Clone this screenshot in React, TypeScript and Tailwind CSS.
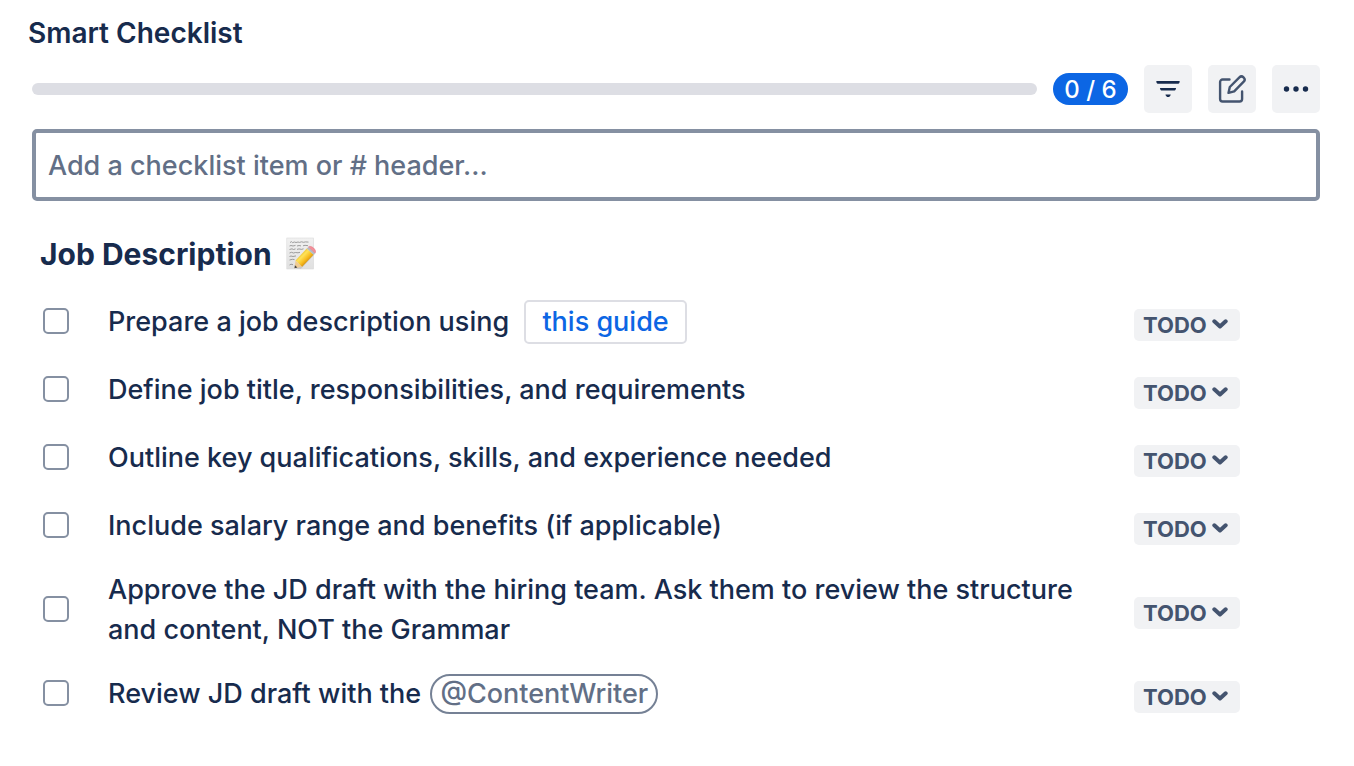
import type { ReactNode } from 'react';

interface ChecklistItem {
  id: number;
  label: string;
  content: ReactNode;
}

const items: ChecklistItem[] = [
  {
    id: 1,
    label: 'Prepare a job description using this guide',
    content: (
      <>
        Prepare a job description using{' '}
        <a
          href="#guide"
          className="ml-2 inline-block h-11 rounded-[5px] border-2 border-[#dddee4] px-4 leading-10 text-[#0c66e4]"
        >
          this guide
        </a>
      </>
    ),
  },
  {
    id: 2,
    label: 'Define job title',
    content: 'Define job title, responsibilities, and requirements',
  },
  {
    id: 3,
    label: 'Outline key qualifications',
    content: 'Outline key qualifications, skills, and experience needed',
  },
  {
    id: 4,
    label: 'Include salary range and benefits',
    content: 'Include salary range and benefits (if applicable)',
  },
  {
    id: 5,
    label: 'Approve the JD draft',
    content:
      'Approve the JD draft with the hiring team. Ask them to review the structure and content, NOT the Grammar',
  },
  {
    id: 6,
    label: 'Review JD draft',
    content: (
      <>
        Review JD draft with the{' '}
        <a
          href="#content-writer"
          className="ml-0.5 inline-block h-10 rounded-full border-2 border-[#758195] px-2 leading-9 text-[#626f86]"
        >
          @ContentWriter
        </a>
      </>
    ),
  },
];

function FilterIcon() {
  return (
    <svg width="24" height="18" viewBox="0 0 24 18" fill="#172b4d" aria-hidden="true">
      <path d="M1 1h22a.8.8 0 0 1 .6 1.200l-.5 1a.9.9 0 0 1-.8.500H1.700a.9.9 0 0 1-.8-.5l-.5-1A.8.8 0 0 1 1 1z" />
      <path d="M4.600 8h14.800c.5 0 .8.400.6.800l-.5 1a1 1 0 0 1-.8.600H5.300a1 1 0 0 1-.8-.6l-.5-1c-.2-.4.100-.8.600-.8z" />
      <path d="M10 14.400h4.200c.5 0 .7.400.4.800l-1.200 1.500a1 1 0 0 1-.8.400h-1a1 1 0 0 1-.8-.4l-1.200-1.500c-.3-.4-.1-.8.400-.8z" />
    </svg>
  );
}

function EditIcon() {
  return (
    <svg
      width="30"
      height="30"
      viewBox="0 0 30 30"
      fill="none"
      stroke="#44546f"
      strokeWidth="2.400"
      strokeLinecap="round"
      strokeLinejoin="round"
      aria-hidden="true"
    >
      <path d="M12.500 5.500H5.600a2.500 2.500 0 0 0-2.500 2.500v17a2.500 2.500 0 0 0 2.500 2.500h17a2.500 2.500 0 0 0 2.500-2.500V17.500" />
      <path d="M11.500 18.900l1.300-5.900L22.400 3.400a2.900 2.900 0 0 1 4.100 0l.2.200a2.900 2.900 0 0 1 0 4.100L17.200 17.400z" />
    </svg>
  );
}

function MoreIcon() {
  return (
    <svg width="26" height="6" viewBox="0 0 26 6" fill="#172b4d" aria-hidden="true">
      <circle cx="3.500" cy="3" r="2.700" />
      <circle cx="13" cy="3" r="2.700" />
      <circle cx="22.500" cy="3" r="2.700" />
    </svg>
  );
}

function MemoIcon() {
  return (
    <svg width="30" height="34" viewBox="0 0 30 34" role="img" aria-label="memo">
      <defs>
        <linearGradient id="paper" x1="0" y1="0" x2="0" y2="1">
          <stop offset="0" stopColor="#f1f1f1" />
          <stop offset="1" stopColor="#e0e0e0" />
        </linearGradient>
        <linearGradient id="pencil" x1="0.250" y1="0.250" x2="0.750" y2="0.750">
          <stop offset="0" stopColor="#e9b61c" />
          <stop offset="0.300" stopColor="#fee35a" />
          <stop offset="0.650" stopColor="#f8bd20" />
          <stop offset="1" stopColor="#c98209" />
        </linearGradient>
      </defs>
      <rect x="0.800" y="1" width="26.800" height="31" fill="url(#paper)" stroke="#d9d9d9" strokeWidth="0.600" />
      <g fill="none" stroke="#888" strokeWidth="0.800">
        <path d="M4 5.500l1.500-.8 1 .9 2-.6 1.500.5 2-.5 1.500.4 2-.6 2 .5 2-.4 3 .2" />
        <path d="M3.500 9l1.500-.5 2 .5 2.500-.6M11 9l2-.5 2 .4M17 8.800l2-.5 3 .4" />
        <path d="M3.500 12.500l2.500-.7 1.500.7 2-.6M11 12.400l2-.5 2.500.5 2-.6" />
        <path d="M3.500 16l2-.7 2 .7 2-.5 2.500.3 2-.5" />
        <path d="M3.500 19.500l1.500-.5 2 .5 3-.6" />
        <path d="M3.500 23l3-.7 2 .3M3.500 28l1.500-.8 2 .5" />
      </g>
      <path d="M10 31.500l5 .2L29.500 16.500l-2-1.500z" fill="#999" opacity="0.350" />
      <path d="M8.500 31.200l1-7.700 6.700 6.200z" fill="#efcb94" />
      <path d="M8.500 31.200l.4-3 2.500 2.300z" fill="#42413f" />
      <path d="M9.500 23.500L20.800 11.600l6.700 6.200-11.300 11.900z" fill="url(#pencil)" />
      <path d="M20.800 11.600l1.700-1.700 6.600 6.200-1.600 1.700z" fill="#b6bbc3" />
      <path d="M22.500 9.900c2.400-2.300 9 3.400 6.600 6.200z" fill="#f48f99" stroke="#df7580" strokeWidth="0.500" />
    </svg>
  );
}

function StatusSelect({ label }: { label: string }) {
  return (
    <div className="relative mt-2 shrink-0">
      <select
        aria-label={`Status of ${label}`}
        className="block h-8 w-[106px] appearance-none rounded-[5px] bg-[#f1f2f4] pl-[9px] text-[22px] leading-8 font-bold text-[#44546f]"
      >
        <option>TODO</option>
        <option>DONE</option>
      </select>
      <svg
        className="pointer-events-none absolute top-2.5 right-3"
        width="16"
        height="10"
        viewBox="0 0 16 10"
        fill="none"
        stroke="#44546f"
        strokeWidth="4"
        strokeLinecap="round"
        strokeLinejoin="round"
        aria-hidden="true"
      >
        <path d="M2.300 2.300L8 7.500l5.700-5.200" />
      </svg>
    </div>
  );
}

function ItemRow({ item }: { item: ChecklistItem }) {
  return (
    <li className="flex min-h-[68px] items-center py-[9px]">
      <input
        type="checkbox"
        aria-label={item.label}
        className="size-[26px] shrink-0 appearance-none rounded-[5px] border-2 border-[#8590a2] bg-white checked:bg-[#0c66e4]"
      />
      <div className="ml-[39px] flex-1 pt-0.5 pr-10">{item.content}</div>
      <StatusSelect label={item.label} />
    </li>
  );
}

export default function App() {
  return (
    <main className="bg-white pt-[13px] pb-10 font-['Inter','Liberation_Sans',sans-serif] text-[27px] leading-10 font-medium text-[#172b4d]">
      <h1 className="px-7 text-[28px] leading-10 font-semibold">Smart Checklist</h1>

      <section className="pr-[34px] pl-8">
        <div className="mt-3 flex items-center gap-4">
          <div
            role="progressbar"
            aria-label="Completed items"
            aria-valuemin={0}
            aria-valuemax={6}
            aria-valuenow={0}
            className="h-3 flex-1 rounded-full bg-[#dddee4]"
          />
          <span className="flex h-8 w-[75px] items-center justify-center rounded-full bg-[#0c66e4] pt-0.5 text-[24px] text-white">
            0 / 6
          </span>
          <button aria-label="Filter" className="flex size-12 items-center justify-center rounded-[5px] bg-[#f1f2f4]">
            <FilterIcon />
          </button>
          <button aria-label="Edit" className="flex size-12 items-center justify-center rounded-[5px] bg-[#f1f2f4]">
            <EditIcon />
          </button>
          <button aria-label="More" className="flex size-12 items-center justify-center rounded-[5px] bg-[#f1f2f4]">
            <MoreIcon />
          </button>
        </div>

        <input
          type="text"
          aria-label="New checklist item"
          placeholder="Add a checklist item or # header..."
          className="mt-4 block h-18 w-full rounded-[5px] border-4 border-[#8590a2] bg-white px-3 placeholder:text-[#626f86]"
        />

        <div className="mt-8 flex items-center gap-3.5 pl-2">
          <h2 className="text-[30px] leading-[42px] font-bold">Job Description</h2>
          <MemoIcon />
        </div>

        <ul className="mt-3 pr-20 pl-[11px]">
          {items.map((item) => (
            <ItemRow key={item.id} item={item} />
          ))}
        </ul>
      </section>
    </main>
  );
}
